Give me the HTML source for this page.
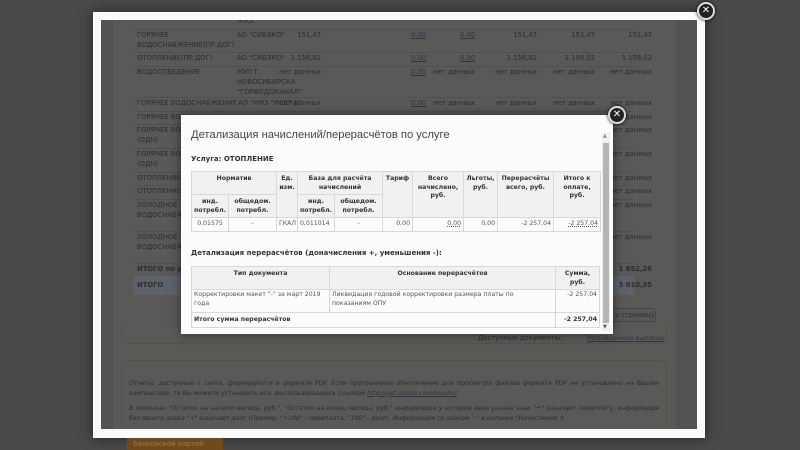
<!DOCTYPE html>
<html><head><meta charset="utf-8"><style>
*{margin:0;padding:0;box-sizing:border-box}
body{width:800px;height:450px;overflow:hidden;background:#4b4947;font-family:"DejaVu Sans","Liberation Sans",sans-serif;position:relative}
.abs{position:absolute}
.frame{left:93px;top:12px;width:612px;height:426px;background:#fbfbfb;box-shadow:0 0 12px rgba(0,0,0,.5)}
.inner{left:101px;top:20px;width:596px;height:409px;background:#555351;overflow:hidden}
.col{left:11px;top:0;width:566px;height:409px;background:#5b5957;border-left:1px solid #514f4d;border-right:1px solid #514f4d}
.t{position:absolute;font-size:6.8px;color:#2c2c2c;line-height:10px;white-space:nowrap}
.r{text-align:right}
.u{text-decoration:underline;color:#2a3444}
.hl{position:absolute;left:33px;width:500px;height:1px;background:#52504e}
.modal{left:181px;top:115px;width:432px;height:219px;background:#fcfcfc;box-shadow:0 0 10px rgba(0,0,0,.5);overflow:hidden}
.close{width:18px;height:18px;border-radius:50%;background:#222;border:2px solid #ddd;color:#fff;font-size:10px;font-weight:bold;line-height:14px;text-align:center;box-shadow:0 0 3px #000}
table{border-collapse:collapse;position:absolute;font-size:6.2px;color:#333;table-layout:fixed}
td,th{border:1px solid #d8d8d8;padding:1px 2px;line-height:8.5px;overflow:hidden}
th{background:#f1f1f1;font-weight:bold;text-align:center;vertical-align:top;padding-top:3px}
td{color:#555}
</style></head><body>
<div class="abs frame"></div>
<div class="abs inner">
 <div class="abs col"></div>
 <div class="t" style="left:136px;top:-4px">ЖКХ</div>
 <div class="hl" style="top:9px"></div>
 <div class="t" style="left:36px;top:10px">ГОРЯЧЕЕ<br>ВОДОСНАБЖЕНИЕ(ПР.ДОГ)</div>
 <div class="t" style="left:136px;top:10px">АО "СИБЭКО"</div>
 <div class="t r" style="left:180px;top:10px;width:40px">151,47</div>
 <div class="t u" style="left:310px;top:10px">0.00</div><div class="t u" style="left:359px;top:10px">0.00</div>
 <div class="t r" style="left:396px;top:10px;width:40px">151,47</div><div class="t r" style="left:454px;top:10px;width:40px">151,47</div><div class="t r" style="left:511px;top:10px;width:40px">151,47</div>
 <div class="hl" style="top:32px"></div>
 <div class="t" style="left:36px;top:33px">ОТОПЛЕНИЕ(ПР.ДОГ)</div><div class="t" style="left:136px;top:33px">АО "СИБЭКО"</div>
 <div class="t r" style="left:180px;top:33px;width:40px">1 158,02</div>
 <div class="t u" style="left:310px;top:33px">0.00</div><div class="t u" style="left:359px;top:33px">0.00</div>
 <div class="t r" style="left:396px;top:33px;width:40px">1 158,02</div><div class="t r" style="left:454px;top:33px;width:40px">1 158,02</div><div class="t r" style="left:511px;top:33px;width:40px">1 158,02</div>
 <div class="hl" style="top:46px"></div>
 <div class="t" style="left:36px;top:47px">ВОДООТВЕДЕНИЕ</div><div class="t" style="left:136px;top:47px">МУП Г.<br>НОВОСИБИРСКА<br>"ГОРВОДОКАНАЛ"</div>
 <div class="t r" style="left:170px;top:47px;width:50px">нет данных</div><div class="t u" style="left:310px;top:47px">0.00</div>
 <div class="t r" style="left:324px;top:47px;width:50px">нет данных</div><div class="t r" style="left:386px;top:47px;width:50px">нет данных</div><div class="t r" style="left:444px;top:47px;width:50px">нет данных</div><div class="t r" style="left:501px;top:47px;width:50px">нет данных</div>
 <div class="hl" style="top:77px"></div>
 <div class="t" style="left:36px;top:78px">ГОРЯЧЕЕ ВОДОСНАБЖЕНИЕ</div><div class="t" style="left:137px;top:78px;background:#5b5957">АО "НМЗ "ИСКРА"</div>
 <div class="t r" style="left:170px;top:78px;width:50px">нет данных</div><div class="t u" style="left:310px;top:78px">0.00</div>
 <div class="t r" style="left:324px;top:78px;width:50px">нет данных</div><div class="t r" style="left:386px;top:78px;width:50px">нет данных</div><div class="t r" style="left:444px;top:78px;width:50px">нет данных</div><div class="t r" style="left:501px;top:78px;width:50px">нет данных</div>
 <div class="hl" style="top:91px"></div>
 <div class="t" style="left:36px;top:92px">ГОРЯЧЕЕ ВОД</div><div class="t r" style="left:501px;top:92px;width:50px">нет данных</div>
 <div class="hl" style="top:104px"></div>
 <div class="t" style="left:36px;top:105px">ГОРЯЧЕЕ ВОД<br>(ОДН)</div><div class="t r" style="left:501px;top:105px;width:50px">нет данных</div>
 <div class="hl" style="top:128px"></div>
 <div class="t" style="left:36px;top:129px">ГОРЯЧЕЕ ВОД<br>(ОДН)</div><div class="t r" style="left:501px;top:129px;width:50px">нет данных</div>
 <div class="hl" style="top:152px"></div>
 <div class="t" style="left:36px;top:153px">ОТОПЛЕНИЕ</div><div class="t r" style="left:501px;top:153px;width:50px">нет данных</div>
 <div class="hl" style="top:165px"></div>
 <div class="t" style="left:36px;top:166px">ОТОПЛЕНИЕ</div><div class="t r" style="left:501px;top:166px;width:50px">нет данных</div>
 <div class="hl" style="top:179px"></div>
 <div class="t" style="left:36px;top:180px">ХОЛОДНОЕ<br>ВОДОСНАБЖ</div><div class="t r" style="left:501px;top:180px;width:50px">нет данных</div>
 <div class="hl" style="top:211px"></div>
 <div class="t" style="left:36px;top:212px">ХОЛОДНОЕ<br>ВОДОСНАБЖ</div><div class="t r" style="left:501px;top:212px;width:50px">нет данных</div>
 <div class="hl" style="top:243px"></div>
 <div class="t" style="left:36px;top:244px;font-weight:bold">ИТОГО по ус</div><div class="t r" style="left:501px;top:244px;width:50px;font-weight:bold">1 652,26</div>
 <div class="abs" style="left:33px;top:256px;width:500px;height:19px;background:#5c616b"></div>
 <div class="t" style="left:36px;top:260px;font-weight:bold">ИТОГО</div><div class="t r" style="left:501px;top:260px;width:50px;font-weight:bold">3 010,35</div>
 <div class="abs" style="left:505px;top:288px;width:50px;height:14px;border:1px solid #444;border-radius:3px;background:#5a5856"></div>
 <div class="t" style="left:514px;top:290px">ь страницу</div>
 <div class="t" style="left:377px;top:313px">Доступные документы:</div>
 <div class="t u" style="left:486px;top:313px;font-size:6.5px">Расширенная выписка</div>
 <div class="abs" style="left:20px;top:302px;width:546px;height:22px;border:1px solid #535149;border-top:none;border-radius:0 0 5px 5px"></div>
 <div class="abs" style="left:20px;top:340px;width:546px;height:80px;border:1px solid #535149;border-radius:5px"></div>
 <div class="t" style="left:28px;top:359px;font-style:italic;font-size:6.2px;line-height:9.5px;white-space:normal;width:530px;text-align:justify">Отчеты, доступные с сайта, формируются в формате PDF. Если программное обеспечение для просмотра файлов формата PDF не установлено на Вашем компьютере, то Вы можете установить его, воспользовавшись ссылкой <span class="u">http://get.adobe.com/reader/</span></div>
 <div class="t" style="left:28px;top:384px;font-style:italic;font-size:6.2px;line-height:9.5px;white-space:normal;width:530px;text-align:justify">В колонках "Остаток на начало месяца, руб.", "Остаток на конец месяца, руб." информация у которой явно указан знак "+" означает переплату, информация без явного знака "+" означает долг (Пример: "+100" - переплата, "100" - долг). Информация со знаком "-" в колонке "Начисления +</div>
</div>
<div class="abs" style="left:127px;top:438px;width:96px;height:12px;background:#6e4a1c;font-size:7px;color:#9a7a50;padding:2px 0 0 6px">банковской картой</div>
<div class="abs close" style="left:697px;top:2px">✕</div>

<div class="abs modal">
 <div class="abs" style="left:10px;top:14px;font-size:11.2px;color:#444;font-family:'Liberation Sans',sans-serif">Детализация начислений/перерасчётов по услуге</div>
 <div class="abs" style="left:10px;top:40px;font-size:7px;font-weight:bold;color:#333">Услуга: ОТОПЛЕНИЕ</div>
 <table style="left:10px;top:56px;width:409px">
  <colgroup><col style="width:37px"><col style="width:48px"><col style="width:21px"><col style="width:37px"><col style="width:48px"><col style="width:30px"><col style="width:51px"><col style="width:34px"><col style="width:56px"><col style="width:47px"></colgroup>
  <tr style="height:23px"><th colspan="2">Норматив</th><th rowspan="2">Ед. изм.</th><th colspan="2">База для расчёта начислений</th><th rowspan="2">Тариф</th><th rowspan="2">Всего начислено, руб.</th><th rowspan="2">Льготы, руб.</th><th rowspan="2">Перерасчёты всего, руб.</th><th rowspan="2">Итого к оплате, руб.</th></tr>
  <tr style="height:23px"><th>инд. потребл.</th><th>общедом. потребл.</th><th>инд. потребл.</th><th>общедом. потребл.</th></tr>
  <tr style="height:14px"><td style="text-align:center">0,01575</td><td style="text-align:center">-</td><td>ГКАЛ</td><td>0,011014</td><td style="text-align:center">-</td><td class="r">0,00</td><td class="r"><u style="text-decoration-style:dotted">0,00</u></td><td class="r">0,00</td><td class="r">-2 257,04</td><td class="r"><u style="text-decoration-style:dotted">-2 257,04</u></td></tr>
 </table>
 <div class="abs" style="left:10px;top:134px;font-size:7px;font-weight:bold;color:#333">Детализация перерасчётов (доначисления +, уменьшения -):</div>
 <table style="left:10px;top:151px;width:408px">
  <colgroup><col style="width:138px"><col style="width:226px"><col style="width:44px"></colgroup>
  <tr style="height:23px"><th>Тип документа</th><th>Основание перерасчётов</th><th>Сумма, руб.</th></tr>
  <tr style="height:23px"><td style="vertical-align:top">Корректировки макет "-" за март 2019 года</td><td style="vertical-align:top">Ликвидация годовой корректировки размера платы по показаниям ОПУ</td><td class="r" style="vertical-align:top">-2 257,04</td></tr>
  <tr style="height:15px"><td colspan="2" style="font-weight:bold;color:#333">Итого сумма перерасчётов</td><td class="r" style="font-weight:bold;color:#333;white-space:nowrap">-2 257,04</td></tr>
 </table>
 <div class="abs" style="left:421px;top:18px;width:8px;height:198px;background:#f0f0f0"></div>
 <div class="abs" style="left:422px;top:28px;width:6px;height:180px;background:#b4b4b4"></div>
 <div class="abs" style="left:422px;top:18px;font-size:5px;color:#888">▲</div>
 <div class="abs" style="left:422px;top:209px;font-size:5px;color:#555">▼</div>
</div>
<div class="abs close" style="left:608px;top:106px">✕</div>
</body></html>
